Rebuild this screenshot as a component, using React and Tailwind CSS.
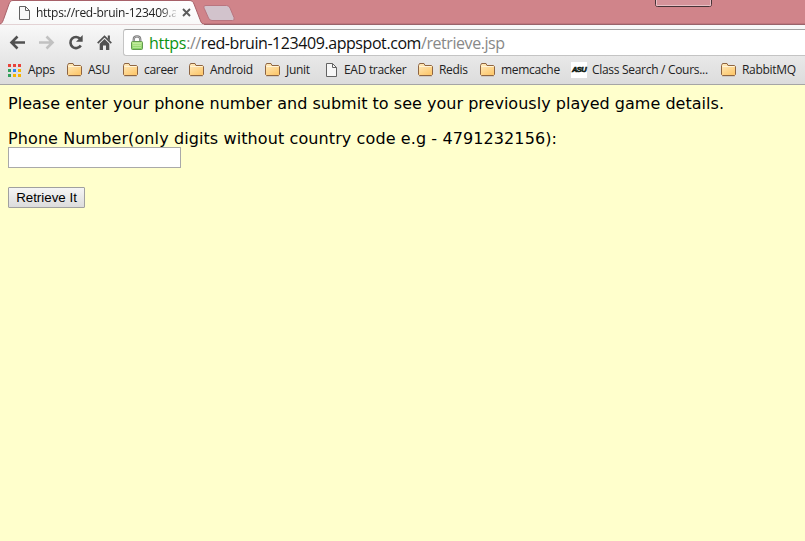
const segoe = "font-['Open_Sans','Noto_Sans',sans-serif]";

function Folder() {
  return (
    <svg className="block h-[14px] w-[15px]" viewBox="0 0 15 14">
      <defs>
        <linearGradient id="folder" x1="0" y1="0" x2="0.6" y2="1">
          <stop offset="0" stopColor="#ffecc2" />
          <stop offset="1" stopColor="#fdc96f" />
        </linearGradient>
      </defs>
      <path d="M.5 11.500V2.500L1.500 .5H6L7 2.500H13.500L14.500 3.500V11.500L13.500 12.500H1.500Z" fill="url(#folder)" stroke="#8e6542" />
      <path d="M1.500 4V3.500H13.500" fill="none" stroke="#fff4d8" />
      <path d="M1 13.500H14" stroke="#cfcac4" />
    </svg>
  );
}

function PageIcon() {
  return (
    <svg className="block h-[14px] w-[11px]" viewBox="0 0 11 14">
      <path d="M.5 .5H6.500L10.500 4.500V13.500H.5Z" fill="#f7f7f7" stroke="#626262" />
      <path d="M6.500 .5V4.500H10.500" fill="none" stroke="#626262" />
    </svg>
  );
}

const appDots = ["#e8423a", "#e8423a", "#e8423a", "#33a05c", "#3186f3", "#f6b400", "#33a05c", "#f6b400", "#f6b400"];

function Apps() {
  return (
    <div className="grid w-[13px] grid-cols-3 gap-[2px]">
      {appDots.map((c, i) => (
        <span key={i} className="size-[3px]" style={{ backgroundColor: c }} />
      ))}
    </div>
  );
}

function AsuLogo() {
  return (
    <div className="flex h-4 w-4 items-center justify-center bg-white font-['Liberation_Sans',sans-serif] text-[7.5px] leading-none font-bold tracking-[-0.6px] text-[#101c14] italic [-webkit-text-stroke:0.6px_#101c14]">
      ASU
    </div>
  );
}

const bookmarks = [
  { icon: <Apps />, label: "Apps", box: "w-[59px]", gap: "w-5" },
  { icon: <Folder />, label: "ASU", box: "w-14", gap: "w-[21px]" },
  { icon: <Folder />, label: "career", box: "w-[66px]", gap: "w-[21px]" },
  { icon: <Folder />, label: "Android", box: "w-[76px]", gap: "w-[21px]" },
  { icon: <Folder />, label: "Junit", box: "w-[61px]", gap: "w-[21px]" },
  { icon: <PageIcon />, label: "EAD tracker", box: "w-[92px]", gap: "w-[18px]" },
  { icon: <Folder />, label: "Redis", box: "w-[62px]", gap: "w-[21px]" },
  { icon: <Folder />, label: "memcache", box: "w-[91px]", gap: "w-[21px]" },
  { icon: <AsuLogo />, label: "Class Search / Cours...", box: "w-[150px]", gap: "w-[21px]" },
  { icon: <Folder />, label: "RabbitMQ", box: "w-[84px]", gap: "w-[21px]" },
];

function TabStrip() {
  return (
    <div className="relative flex h-[25px] bg-[#d0848a]">
      <svg className="absolute top-0 left-0 h-[25px] w-[805px]" viewBox="0 0 805 25">
        <defs>
          <linearGradient id="tab" x1="0" y1="0" x2="0" y2="1">
            <stop offset="0" stopColor="#fff" />
            <stop offset="1" stopColor="#f8f8f8" />
          </linearGradient>
        </defs>
        <path d="M0 24.500H805" stroke="#98636a" />
        <path d="M0 23.500H805" stroke="#c0767d" />
        <path d="M0 25V24C2 23.500 2.500 22 3.500 19.500L9 4C10 1.500 11 .5 13 .5H189C192 .5 193 1.500 194 4L200 19.500C201 23 202.500 24.500 205 24.500V25Z" fill="url(#tab)" stroke="#a76169" strokeWidth="1" />
        <path d="M0 25H204" stroke="#f8f8f8" strokeWidth="1.2" />
        <path d="M206 5.500H226.500Q229 5.500 230 8L234 17.500Q235 20.500 232.500 20.500H212Q209.500 20.500 208.500 18L204.300 8.500Q203 5.500 206 5.500Z" fill="#d2c3cc" stroke="#b9757f" />
        <path d="M655.500 0V4.500Q655.500 6.500 657.500 6.500H709.500Q711.500 6.500 711.500 4.500V0" fill="#d5939a" stroke="#463337" />
        <path d="M656.500 0V5.500H710.500V0" fill="none" stroke="#e9bfc4" />
      </svg>
      <div className="relative flex h-[25px] w-[204px] items-center pl-[19px]">
        <PageIcon />
        <span className={`${segoe} ml-[6px] w-[140px] text-[12px] tracking-[-0.27px] whitespace-nowrap text-[#222] [mask-image:linear-gradient(to_right,#000_124px,transparent_144px)]`}>
          https://red-bruin-123409.a
        </span>
        <svg className="ml-[6px] h-[9px] w-[9px]" viewBox="0 0 9 9">
          <path d="M1 1L8 8M8 1L1 8" stroke="#5b5b5b" strokeWidth="1.9" />
        </svg>
      </div>
    </div>
  );
}

function Toolbar() {
  return (
    <div className="flex h-8 bg-gradient-to-b from-[#f8f8f8] to-[#e8e8e8] pt-1">
      <div className="flex w-[123px] shrink-0 pl-[9px]">
        <svg className="h-[27px] w-[110px]" viewBox="9 29 110 27">
          <g fill="none" stroke="#515151" strokeWidth="2.6">
            <path d="M12 42.500H25M17.500 36.500L11.500 42.500L17.500 48.500" />
            <path d="M39 42.500H52M46.500 36.500L52.500 42.500L46.500 48.500" stroke="#c1c1c1" />
            <path d="M80.300 38.900A5.600 5.600 0 1 0 80.800 45.500" />
          </g>
          <path d="M82.700 35V41.700H76Z" fill="#515151" />
          <path d="M97.700 43.200L104.500 36.400L111.300 43.200" fill="none" stroke="#515151" strokeWidth="1.700" />
          <path d="M99.700 43.800L104.500 39L109.300 43.800V50H106V45.500H103V50H99.700Z M107.800 35.500H109.900V40.500L107.800 38.400Z" fill="#515151" />
        </svg>
      </div>
      <div className="flex h-[27px] flex-1 items-center rounded-l-[3px] border border-r-0 border-[#c4c4c4] border-t-[#a3a3a3] bg-white pl-[7px]">
        <svg className="h-[16px] w-[12px]" viewBox="0 0 12 16">
          <defs>
            <linearGradient id="lock" x1="0" y1="0" x2="0" y2="1">
              <stop offset="0" stopColor="#b9e88e" />
              <stop offset="1" stopColor="#84d162" />
            </linearGradient>
          </defs>
          <path d="M2.700 8V4.500Q2.700 1.300 6 1.300T9.300 4.500V8" fill="none" stroke="#777" strokeWidth="2.200" />
          <path d="M2.700 8V4.500Q2.700 1.300 6 1.300T9.300 4.500V8" fill="none" stroke="#ccc" strokeWidth=".7" />
          <rect x=".5" y="6.500" width="11" height="8" rx="1" fill="url(#lock)" stroke="#62994f" />
          <path d="M2 8.500H10M2 10.500H10M2 12.500H10" stroke="#d0f0b0" strokeWidth=".6" />
        </svg>
        <span className={`${segoe} ml-[6px] text-[16px] leading-[22px] tracking-[-0.43px] whitespace-nowrap text-[#888]`}>
          <span className="tracking-[-0.3px] text-[#0c9312]">https</span>://<span className="text-[#111]">red-bruin-123409.appspot.com</span>/retrieve.jsp
        </span>
      </div>
    </div>
  );
}

function BookmarksBar() {
  return (
    <div className="flex h-7 items-center overflow-hidden border-b border-[#a5a5a5] bg-gradient-to-b from-[#e8e8e8] to-[#dcdcdc] pb-px pl-2">
      {bookmarks.map((b) => (
        <div key={b.label} className={`flex h-4 shrink-0 items-center ${b.box}`}>
          <div className={`shrink-0 ${b.gap}`}>{b.icon}</div>
          <span className={`${segoe} text-[12px] leading-4 tracking-[-0.3px] whitespace-nowrap text-[#222]`}>{b.label}</span>
        </div>
      ))}
    </div>
  );
}

export default function App() {
  return (
    <div className="flex h-[541px] w-[805px] flex-col overflow-hidden bg-[#ffffcc]">
      <TabStrip />
      <Toolbar />
      <BookmarksBar />
      <main className="flex flex-col items-start px-2 pt-[9px] font-['DejaVu_Sans',Verdana,sans-serif] text-[16px] leading-[19px] whitespace-nowrap text-black">
        <p className="tracking-[0.02px]">Please enter your phone number and submit to see your previously played game details.</p>
        <label htmlFor="phone" className="mt-4 tracking-[0.1px]">Phone Number(only digits without country code e.g - 4791232156):</label>
        <input id="phone" className="-mt-px h-[21px] w-[173px] border border-[#a9a9a9] bg-white" />
        <button className="mt-[19px] flex h-[21px] w-[77px] items-center justify-center rounded-[1px] border border-[#a0a0a0] bg-gradient-to-b from-[#f5f5f5] to-[#dcdcdc] font-['Liberation_Sans',Arial,sans-serif] text-[13.33px] leading-none">
          Retrieve It
        </button>
      </main>
    </div>
  );
}
